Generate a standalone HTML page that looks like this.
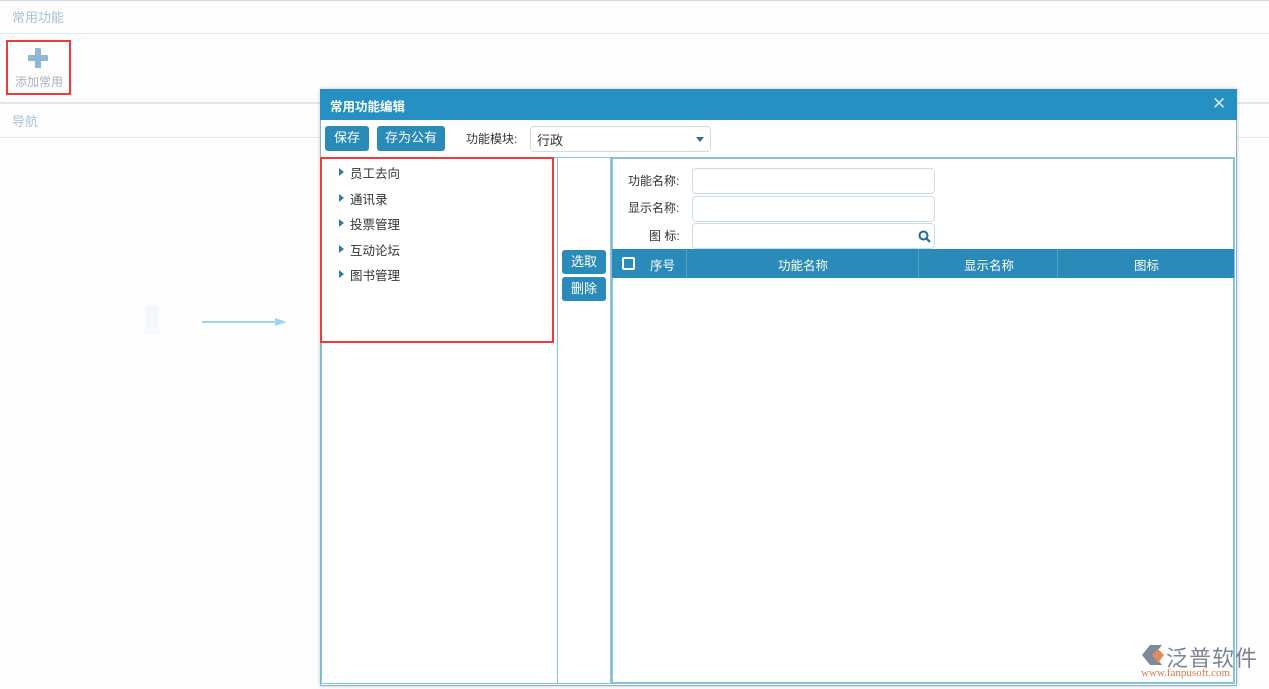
<!DOCTYPE html>
<html><head><meta charset="utf-8"><style>
*{margin:0;padding:0;box-sizing:border-box}
body{width:1269px;height:689px;background:#fdfdfd;font-family:"Liberation Sans","Noto Sans CJK SC",sans-serif;font-size:12px;position:relative;overflow:hidden;color:#333}
.a{position:absolute;white-space:nowrap}
.btn{position:absolute;background:#2b8bb8;color:#fff;border-radius:3px;font-size:13px;text-align:center;line-height:23px!important}
.inp{position:absolute;border:1px solid #c9dde6;border-radius:4px;background:#fff}
.lbl{position:absolute;font-size:12px;color:#333;white-space:nowrap}
.tree div{position:absolute;left:28px;font-size:12.5px;color:#333;white-space:nowrap}
.tree div:before{content:"";position:absolute;left:-11px;top:5px;border-left:5px solid #2b7db0;border-top:4px solid transparent;border-bottom:4px solid transparent}
</style></head><body>
<div class="a" style="left:0;top:0;width:1269px;height:1px;background:#cfdce6"></div>
<div class="a" style="left:12px;top:7px;color:#a9c3d4;font-size:13px">常用功能</div>
<div class="a" style="left:0;top:33px;width:1269px;height:1px;background:#dde8ee"></div>
<div class="a" style="left:6px;top:40px;width:65px;height:55px;border:2px solid #ee3a3a"></div>
<div class="a" style="left:35px;top:48px;width:6px;height:20px;background:#8cb9cf;border-radius:1px"></div>
<div class="a" style="left:28px;top:55px;width:20px;height:6px;background:#8cb9cf;border-radius:1px"></div>
<div class="a" style="left:15px;top:73px;color:#a7b4bd;font-size:12px">添加常用</div>
<div class="a" style="left:0;top:102px;width:1269px;height:2px;background:#dbe9ef"></div>
<div class="a" style="left:12px;top:111px;color:#a9c3d4;font-size:13px">导航</div>
<div class="a" style="left:0;top:137px;width:1269px;height:1px;background:#e2ecf1"></div>
<div class="a" style="left:202px;top:321px;width:78px;height:2px;background:#9fd6ea"></div>
<div class="a" style="left:275px;top:318px;border-left:12px solid #9fd6ea;border-top:4px solid transparent;border-bottom:4px solid transparent"></div>
<div class="a" style="left:145px;top:305px;width:14px;height:28px;background:#f3f9fb"></div>

<div class="a" style="left:320px;top:89px;width:917px;height:597px;background:#fff;border:1px solid #7fb6cf;box-shadow:0 0 4px rgba(0,0,0,.2)"></div>
<div class="a" style="left:320px;top:89px;width:917px;height:31px;background:#2590c1"></div>
<div class="a" style="left:330px;top:96px;color:#fff;font-size:12.5px;font-weight:bold">常用功能编辑</div>
<div class="a" style="left:1212px;top:94px;color:#cfe6f1;font-size:17px">✕</div>
<div class="btn" style="left:325px;top:126px;width:44px;height:25px">保存</div>
<div class="btn" style="left:377px;top:126px;width:68px;height:25px">存为公有</div>
<div class="lbl" style="left:466px;top:130px">功能模块:</div>
<div class="inp" style="left:530px;top:126px;width:181px;height:26px"><span class="a" style="left:6px;top:3px;font-size:13px">行政</span><span class="a" style="left:165px;top:10px;border-top:5px solid #2b6d96;border-left:4px solid transparent;border-right:4px solid transparent"></span></div>

<div class="a" style="left:321px;top:157px;width:237px;height:527px;border:1px solid #8cc2d6"></div>
<div class="a" style="left:558px;top:157px;width:53px;height:527px;border:1px solid #8cc2d6;border-left:none"></div>
<div class="a" style="left:611px;top:157px;width:624px;height:527px;border:2px solid #8cc2d6"></div>
<div class="a tree" style="left:322px;top:157px;width:230px;height:180px">
<div style="top:6px">员工去向</div><div style="top:32px">通讯录</div><div style="top:57px">投票管理</div><div style="top:83px">互动论坛</div><div style="top:108px">图书管理</div></div>
<div class="a" style="left:320px;top:157px;width:234px;height:186px;border:2px solid #ee3a3a"></div>
<div class="btn" style="left:562px;top:250px;width:44px;height:24px">选取</div>
<div class="btn" style="left:562px;top:277px;width:44px;height:24px">删除</div>

<div class="lbl" style="left:628px;top:172px">功能名称:</div>
<div class="inp" style="left:692px;top:168px;width:243px;height:26px"></div>
<div class="lbl" style="left:628px;top:199px">显示名称:</div>
<div class="inp" style="left:692px;top:196px;width:243px;height:26px"></div>
<div class="lbl" style="left:649px;top:227px">图 标:</div>
<div class="inp" style="left:692px;top:223px;width:243px;height:26px"><svg class="a" style="left:225px;top:6px" width="13" height="13"><circle cx="5.5" cy="5.5" r="4" stroke="#1d6b98" stroke-width="2" fill="none"/><line x1="8.5" y1="8.5" x2="12" y2="12" stroke="#1d6b98" stroke-width="2.2"/></svg></div>
<div class="a" style="left:612px;top:249px;width:622px;height:29px;background:#2b8bb8;color:#fff;font-size:12.5px">
<span class="a" style="left:10px;top:8px;width:13px;height:13px;border:2px solid #fff;border-radius:2px"></span>
<span class="a" style="left:38px;top:6px">序号</span>
<span class="a" style="left:74px;top:0;width:1px;height:29px;background:#4fa2c8"></span>
<span class="a" style="left:166px;top:6px">功能名称</span>
<span class="a" style="left:306px;top:0;width:1px;height:29px;background:#4fa2c8"></span>
<span class="a" style="left:352px;top:6px">显示名称</span>
<span class="a" style="left:445px;top:0;width:1px;height:29px;background:#4fa2c8"></span>
<span class="a" style="left:522px;top:6px">图标</span></div>

<svg class="a" style="left:1140px;top:643px" width="26" height="24"><path d="M2 12 L10 2 L22 2 L14 12 L22 22 L10 22 Z" fill="#7e8a9a"/><path d="M12 12 L18 6 L24 12 L18 20 Z" fill="#e38a5c"/></svg>
<div class="a" style="left:1166px;top:641px;font-size:22px;color:#7c8594;letter-spacing:1px">泛普软件</div>
<div class="a" style="left:1141px;top:667px;font-size:11px;color:#d9774a;font-family:'Liberation Serif',serif">www.fanpusoft.com</div>
</body></html>
